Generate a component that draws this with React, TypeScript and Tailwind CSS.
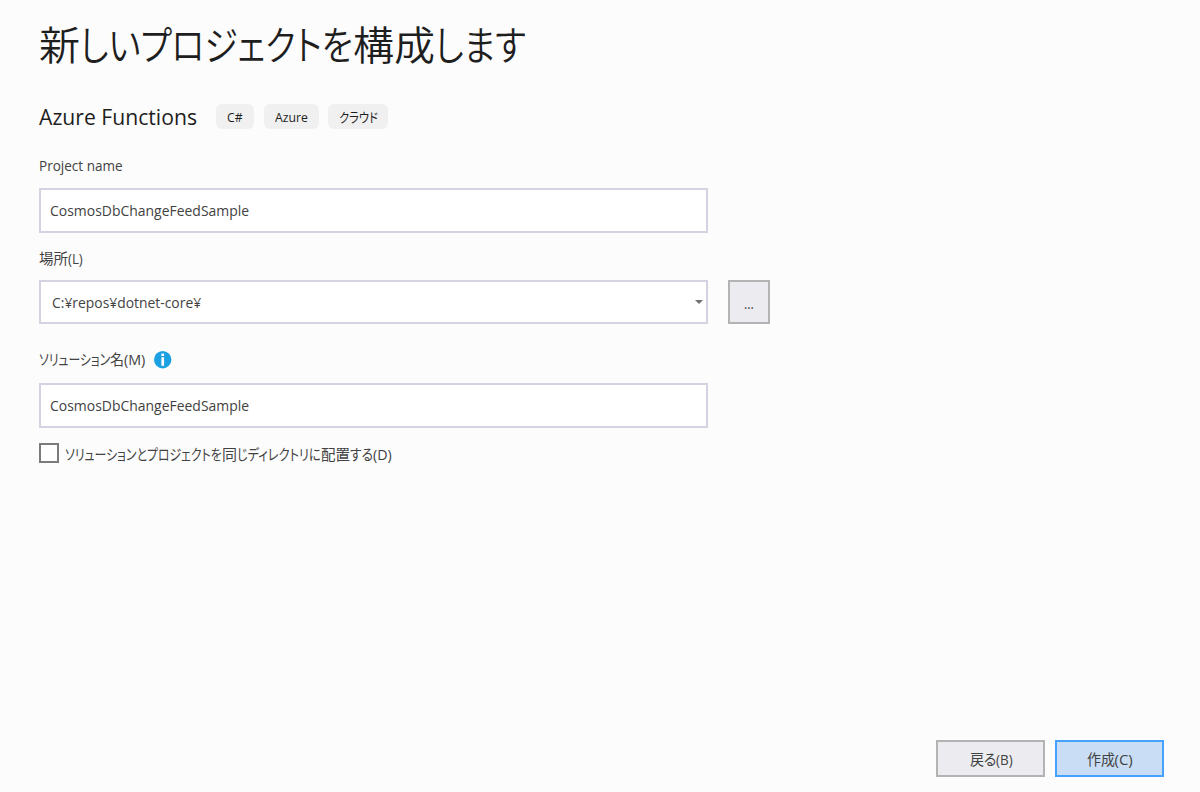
import { useLayoutEffect, useRef, useState } from 'react'

interface FitProps {
  text: string
  width: number
}

// One run of text, condensed or widened to take up exactly `width` pixels
function Fit({ text, width }: FitProps) {
  const ref = useRef<HTMLSpanElement>(null)
  const [scale, setScale] = useState(1)

  useLayoutEffect(() => {
    if (ref.current) setScale(width / ref.current.offsetWidth)
  }, [text, width])

  return (
    <span className="inline-block whitespace-nowrap" style={{ width }}>
      <span ref={ref} className="inline-block origin-left" style={{ transform: `scaleX(${scale})` }}>{text}</span>
    </span>
  )
}

function InfoIcon() {
  return (
    <svg viewBox="0 0 18 18" className="w-[18px] h-[18px]">
      <circle cx="8.7" cy="8.7" r="8.7" fill="#1ba1e2" />
      <rect x="7.4" y="2.6" width="2.7" height="2.4" fill="#fff" />
      <rect x="7.4" y="6.2" width="2.7" height="8.6" fill="#fff" />
    </svg>
  )
}

const tags = [
  { text: 'C#', width: 16, box: 'w-[38px]' },
  { text: 'Azure', width: 33, box: 'w-[55px]' },
  { text: 'クラウド', width: 39, box: 'w-[60px]' },
]

export default function App() {
  const [projectName] = useState('CosmosDbChangeFeedSample')
  const [location] = useState('C:¥repos¥dotnet-core¥')
  const [sameDir, setSameDir] = useState(false)

  return (
    <div className="flex flex-col w-[1200px] h-[792px] bg-[#fcfcfc] pl-[39px] pr-9 pb-[15px] text-[15px] leading-[18px] text-[#424242] font-['Open_Sans','Noto_Sans_CJK_JP',sans-serif] [font-feature-settings:'palt'] overflow-hidden">
      <h1 className="flex mt-[15px] h-[60px] text-[40px] leading-[60px] font-[350] text-[#1e1e1e]">
        <Fit text="新" width={41} />
        <Fit text="しいプロジェクトを" width={273} />
        <Fit text="構成" width={82} />
        <Fit text="します" width={91} />
      </h1>

      <div className="flex items-start mt-[29px] h-[26px]">
        <h2 className="mr-[19px] text-[22.5px] leading-[26px] text-[#1e1e1e]">
          <Fit text="Azure Functions" width={158} />
        </h2>
        <div className="flex gap-[9.5px]">
          {tags.map((t) => (
            <span key={t.text} className={`flex items-center justify-center h-[25px] rounded-md bg-[#f0f0f0] text-[13px] text-[#1e1e1e] ${t.box}`}>
              <Fit text={t.text} width={t.width} />
            </span>
          ))}
        </div>
      </div>

      <label className="mt-[26px] h-5">
        <Fit text="Project name" width={84} />
      </label>
      <div className="flex items-center mt-3 w-[669px] h-[45px] border-2 border-[#d3d3e1] bg-white pl-[9px] pb-0.5">
        <Fit text={projectName} width={199} />
      </div>

      <label className="flex mt-4 h-5">
        <Fit text="場所" width={29} />
        <Fit text="(L)" width={15} />
      </label>
      <div className="flex mt-[11px] gap-5">
        <div className="flex items-center justify-between w-[669px] h-[44px] border-2 border-[#d3d3e1] bg-white pl-[11px] pr-[3px]">
          <Fit text={location} width={149} />
          <svg viewBox="0 0 8 4" className="w-2 h-1">
            <path d="M0 0h8L4 4z" fill="#717171" />
          </svg>
        </div>
        <button className="w-[42px] h-[44px] border-2 border-[#b3b3b3] bg-[#ececf0] pt-0.5">
          <Fit text="..." width={10} />
        </button>
      </div>

      <div className="flex items-start mt-[26px] h-5">
        <Fit text="ソリューション" width={71} />
        <Fit text="名" width={14} />
        <Fit text="(M)" width={21} />
        <span className="mt-px ml-[9px]"><InfoIcon /></span>
      </div>
      <div className="flex items-center mt-[13px] w-[669px] h-[45px] border-2 border-[#d3d3e1] bg-white pl-[9px] pb-0.5">
        <Fit text={projectName} width={199} />
      </div>

      <div className="flex items-start mt-[15px]">
        <button
          role="checkbox"
          aria-checked={sameDir}
          onClick={() => setSameDir(!sameDir)}
          className="w-5 h-5 border-2 border-[#7b7b7b] bg-[#fefefe]"
        />
        <span className="flex mt-0.5 ml-[6px]">
          <Fit text="ソリューションとプロジェクトを" width={157} />
          <Fit text="同" width={15} />
          <Fit text="じディレクトリに" width={84} />
          <Fit text="配置" width={29} />
          <Fit text="する" width={23} />
          <Fit text="(D)" width={19} />
        </span>
      </div>

      <div className="flex justify-end gap-[10px] mt-auto">
        <button className="flex items-center justify-center w-[109px] h-[37px] border-2 border-[#b3b3b3] bg-[#ececf0] pl-px">
          <Fit text="戻" width={14} />
          <Fit text="る" width={12} />
          <Fit text="(B)" width={17} />
        </button>
        <button className="flex items-center justify-center w-[109px] h-[37px] border-2 border-[#45a2ff] bg-[#c9def5]">
          <Fit text="作成" width={28} />
          <Fit text="(C)" width={18} />
        </button>
      </div>
    </div>
  )
}
